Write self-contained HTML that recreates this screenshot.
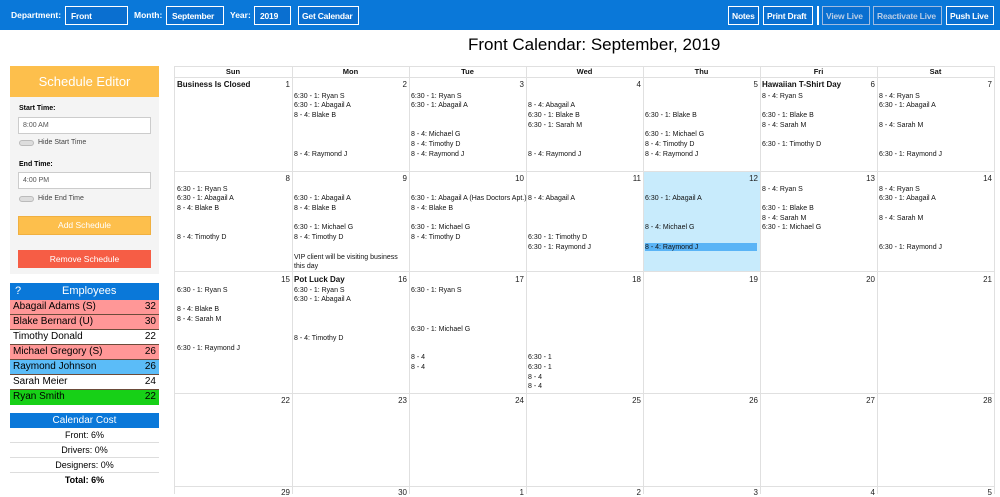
<!DOCTYPE html>
<html><head><meta charset="utf-8"><style>
*{margin:0;padding:0;box-sizing:border-box}
body{width:1000px;height:494px;overflow:hidden;background:#fff;font-family:"Liberation Sans",Arial,sans-serif;position:relative;color:#000}
.a{position:absolute;white-space:nowrap}
.bar{position:absolute;left:0;top:0;width:1000px;height:30px;background:#0a78d9}
.lbl{position:absolute;top:10px;color:#fff;font-weight:bold;font-size:8.5px}
.btn{position:absolute;top:6px;height:19px;border:1.5px solid #fff;color:#fff;font-weight:bold;font-size:8.5px;padding-left:5px;background:#0a6fd0;white-space:nowrap;overflow:hidden;letter-spacing:-0.2px;display:flex;align-items:center}
.btn.dim{border-color:#9fbbe0;color:#b9cde6}
.t{position:absolute;font-size:7px;line-height:9px;white-space:nowrap;color:#111}
.b{font-weight:bold;font-size:8px}
.h{font-weight:bold;font-size:7.5px}
.n{position:absolute;font-size:8px;line-height:9px;color:#222;text-align:right;width:20px}
.vl{position:absolute;width:1px;background:#e0e0e0}
.hl{position:absolute;height:1px;background:#e0e0e0;left:174px;width:820px}
.emp{position:absolute;left:10px;width:149px;height:15px;font-size:10px;line-height:14px;padding:0 3px;border-bottom:1px solid #6b4b3a}
.emp span{float:right}
.cost{position:absolute;left:10px;width:149px;height:15px;font-size:9px;line-height:15px;text-align:center;border-bottom:1px solid #ddd}
</style></head><body>
<div class="bar"></div>
<div class="lbl" style="left:11px">Department:</div>
<div class="btn" style="left:65px;width:63px">Front</div>
<div class="lbl" style="left:134px">Month:</div>
<div class="btn" style="left:166px;width:58px">September</div>
<div class="lbl" style="left:230px">Year:</div>
<div class="btn" style="left:254px;width:37px">2019</div>
<div class="btn" style="left:298px;width:61px;padding-left:3px">Get Calendar</div>
<div class="btn" style="left:728px;width:31px;padding-left:3px">Notes</div>
<div class="btn" style="left:763px;width:50px;padding-left:3px">Print Draft</div>
<div class="a" style="left:817px;top:6px;width:2px;height:19px;background:#fff"></div>
<div class="btn dim" style="left:822px;width:48px;padding-left:3px">View Live</div>
<div class="btn dim" style="left:873px;width:69px;padding-left:3px">Reactivate Live</div>
<div class="btn" style="left:946px;width:48px;padding-left:3px">Push Live</div>

<div class="a" style="left:468px;top:35px;font-size:17px">Front Calendar: September, 2019</div>

<div class="a" style="left:10px;top:66px;width:149px;height:208px;background:#f4f4f4"></div>
<div class="a" style="left:10px;top:66px;width:149px;height:31px;background:#fdbf4c;color:#fff;font-size:13px;text-align:center;line-height:31px">Schedule Editor</div>
<div class="a" style="left:19px;top:105px;font-size:7px;font-weight:bold">Start Time:</div>
<div class="a" style="left:18px;top:117px;width:133px;height:17px;background:#fff;border:1px solid #ccc;font-size:7px;line-height:15px;padding-left:4px;color:#555">8:00 AM</div>
<div class="a" style="left:19px;top:140px;width:15px;height:6px;background:#ddd;border:1px solid #bbb;border-radius:3px"></div>
<div class="a" style="left:38px;top:139px;font-size:7px;color:#444">Hide Start Time</div>
<div class="a" style="left:19px;top:161px;font-size:7px;font-weight:bold">End Time:</div>
<div class="a" style="left:18px;top:172px;width:133px;height:17px;background:#fff;border:1px solid #ccc;font-size:7px;line-height:15px;padding-left:4px;color:#555">4:00 PM</div>
<div class="a" style="left:19px;top:196px;width:15px;height:6px;background:#ddd;border:1px solid #bbb;border-radius:3px"></div>
<div class="a" style="left:38px;top:195px;font-size:7px;color:#444">Hide End Time</div>
<div class="a" style="left:18px;top:216px;width:133px;height:19px;background:#fdbf4c;border:1px solid #f0b040;color:#fff;font-size:8.5px;text-align:center;line-height:17px">Add Schedule</div>
<div class="a" style="left:18px;top:250px;width:133px;height:18px;background:#f65d45;color:#fff;font-size:8.5px;text-align:center;line-height:18px">Remove Schedule</div>

<div class="a" style="left:10px;top:283px;width:149px;height:17px;background:#0a78d9;color:#fff;font-size:11px;line-height:17px"><span style="position:absolute;left:5px">?</span><span style="position:absolute;left:52px">Employees</span></div>
<div class="emp" style="top:300px;background:#ff9797">Abagail Adams (S)<span>32</span></div>
<div class="emp" style="top:315px;background:#ff9797">Blake Bernard (U)<span>30</span></div>
<div class="emp" style="top:330px;background:#fff">Timothy Donald<span>22</span></div>
<div class="emp" style="top:345px;background:#ff9797">Michael Gregory (S)<span>26</span></div>
<div class="emp" style="top:360px;background:#5bbcf8">Raymond Johnson<span>26</span></div>
<div class="emp" style="top:375px;background:#fff">Sarah Meier<span>24</span></div>
<div class="emp" style="top:390px;background:#17d017;border-bottom:none;height:15px">Ryan Smith<span>22</span></div>

<div class="a" style="left:10px;top:413px;width:149px;height:15px;background:#0a78d9;color:#fff;font-size:10px;text-align:center;line-height:15px">Calendar Cost</div>
<div class="cost" style="top:428px">Front: 6%</div>
<div class="cost" style="top:443px">Drivers: 0%</div>
<div class="cost" style="top:458px">Designers: 0%</div>
<div class="cost" style="top:473px;font-weight:bold;border:none">Total: 6%</div>

<div class="a" style="left:643px;top:171px;width:117px;height:100px;background:#c8ebfc"></div>
<div class="a" style="left:645px;top:243px;width:112px;height:8px;background:#5ab4f6"></div>
<div class="hl" style="top:66px"></div>
<div class="hl" style="top:77px"></div>
<div class="hl" style="top:171px"></div>
<div class="hl" style="top:271px"></div>
<div class="hl" style="top:393px"></div>
<div class="hl" style="top:486px"></div>
<div class="vl" style="left:174px;top:66px;height:428px"></div>
<div class="vl" style="left:292px;top:66px;height:428px"></div>
<div class="vl" style="left:409px;top:66px;height:428px"></div>
<div class="vl" style="left:526px;top:66px;height:428px"></div>
<div class="vl" style="left:643px;top:66px;height:428px"></div>
<div class="vl" style="left:760px;top:66px;height:428px"></div>
<div class="vl" style="left:877px;top:66px;height:428px"></div>
<div class="vl" style="left:994px;top:66px;height:428px"></div>

<div class="t h" style="left:174px;width:118px;text-align:center;top:67px">Sun</div>
<div class="t h" style="left:292px;width:117px;text-align:center;top:67px">Mon</div>
<div class="t h" style="left:409px;width:117px;text-align:center;top:67px">Tue</div>
<div class="t h" style="left:526px;width:117px;text-align:center;top:67px">Wed</div>
<div class="t h" style="left:643px;width:117px;text-align:center;top:67px">Thu</div>
<div class="t h" style="left:760px;width:117px;text-align:center;top:67px">Fri</div>
<div class="t h" style="left:877px;width:117px;text-align:center;top:67px">Sat</div>

<div class="n" style="left:270px;top:80px">1</div><div class="n" style="left:387px;top:80px">2</div><div class="n" style="left:504px;top:80px">3</div><div class="n" style="left:621px;top:80px">4</div><div class="n" style="left:738px;top:80px">5</div><div class="n" style="left:855px;top:80px">6</div><div class="n" style="left:972px;top:80px">7</div>
<div class="n" style="left:270px;top:174px">8</div><div class="n" style="left:387px;top:174px">9</div><div class="n" style="left:504px;top:174px">10</div><div class="n" style="left:621px;top:174px">11</div><div class="n" style="left:738px;top:174px">12</div><div class="n" style="left:855px;top:174px">13</div><div class="n" style="left:972px;top:174px">14</div>
<div class="n" style="left:270px;top:275px">15</div><div class="n" style="left:387px;top:275px">16</div><div class="n" style="left:504px;top:275px">17</div><div class="n" style="left:621px;top:275px">18</div><div class="n" style="left:738px;top:275px">19</div><div class="n" style="left:855px;top:275px">20</div><div class="n" style="left:972px;top:275px">21</div>
<div class="n" style="left:270px;top:396px">22</div><div class="n" style="left:387px;top:396px">23</div><div class="n" style="left:504px;top:396px">24</div><div class="n" style="left:621px;top:396px">25</div><div class="n" style="left:738px;top:396px">26</div><div class="n" style="left:855px;top:396px">27</div><div class="n" style="left:972px;top:396px">28</div>
<div class="n" style="left:270px;top:488px">29</div><div class="n" style="left:387px;top:488px">30</div><div class="n" style="left:504px;top:488px">1</div><div class="n" style="left:621px;top:488px">2</div><div class="n" style="left:738px;top:488px">3</div><div class="n" style="left:855px;top:488px">4</div><div class="n" style="left:972px;top:488px">5</div>

<div class="t b" style="left:177px;top:80px">Business Is Closed</div>
<div class="t" style="left:294px;top:92px">6:30 - 1: Ryan S</div>
<div class="t" style="left:294px;top:101px">6:30 - 1: Abagail A</div>
<div class="t" style="left:294px;top:111px">8 - 4: Blake B</div>
<div class="t" style="left:294px;top:150px">8 - 4: Raymond J</div>
<div class="t" style="left:411px;top:92px">6:30 - 1: Ryan S</div>
<div class="t" style="left:411px;top:101px">6:30 - 1: Abagail A</div>
<div class="t" style="left:411px;top:130px">8 - 4: Michael G</div>
<div class="t" style="left:411px;top:140px">8 - 4: Timothy D</div>
<div class="t" style="left:411px;top:150px">8 - 4: Raymond J</div>
<div class="t" style="left:528px;top:101px">8 - 4: Abagail A</div>
<div class="t" style="left:528px;top:111px">6:30 - 1: Blake B</div>
<div class="t" style="left:528px;top:121px">6:30 - 1: Sarah M</div>
<div class="t" style="left:528px;top:150px">8 - 4: Raymond J</div>
<div class="t" style="left:645px;top:111px">6:30 - 1: Blake B</div>
<div class="t" style="left:645px;top:130px">6:30 - 1: Michael G</div>
<div class="t" style="left:645px;top:140px">8 - 4: Timothy D</div>
<div class="t" style="left:645px;top:150px">8 - 4: Raymond J</div>
<div class="t b" style="left:762px;top:80px">Hawaiian T-Shirt Day</div>
<div class="t" style="left:762px;top:92px">8 - 4: Ryan S</div>
<div class="t" style="left:762px;top:111px">6:30 - 1: Blake B</div>
<div class="t" style="left:762px;top:121px">8 - 4: Sarah M</div>
<div class="t" style="left:762px;top:140px">6:30 - 1: Timothy D</div>
<div class="t" style="left:879px;top:92px">8 - 4: Ryan S</div>
<div class="t" style="left:879px;top:101px">6:30 - 1: Abagail A</div>
<div class="t" style="left:879px;top:121px">8 - 4: Sarah M</div>
<div class="t" style="left:879px;top:150px">6:30 - 1: Raymond J</div>

<div class="t" style="left:177px;top:185px">6:30 - 1: Ryan S</div>
<div class="t" style="left:177px;top:194px">6:30 - 1: Abagail A</div>
<div class="t" style="left:177px;top:204px">8 - 4: Blake B</div>
<div class="t" style="left:177px;top:233px">8 - 4: Timothy D</div>
<div class="t" style="left:294px;top:194px">6:30 - 1: Abagail A</div>
<div class="t" style="left:294px;top:204px">8 - 4: Blake B</div>
<div class="t" style="left:294px;top:223px">6:30 - 1: Michael G</div>
<div class="t" style="left:294px;top:233px">8 - 4: Timothy D</div>
<div class="t" style="left:294px;top:253px;white-space:normal;width:112px;line-height:9px">VIP client will be visiting business this day</div>
<div class="t" style="left:411px;top:194px">6:30 - 1: Abagail A (Has Doctors Apt.)</div>
<div class="t" style="left:411px;top:204px">8 - 4: Blake B</div>
<div class="t" style="left:411px;top:223px">6:30 - 1: Michael G</div>
<div class="t" style="left:411px;top:233px">8 - 4: Timothy D</div>
<div class="t" style="left:528px;top:194px">8 - 4: Abagail A</div>
<div class="t" style="left:528px;top:233px">6:30 - 1: Timothy D</div>
<div class="t" style="left:528px;top:243px">6:30 - 1: Raymond J</div>
<div class="t" style="left:645px;top:194px">6:30 - 1: Abagail A</div>
<div class="t" style="left:645px;top:223px">8 - 4: Michael G</div>
<div class="t" style="left:645px;top:243px">8 - 4: Raymond J</div>
<div class="t" style="left:762px;top:185px">8 - 4: Ryan S</div>
<div class="t" style="left:762px;top:204px">6:30 - 1: Blake B</div>
<div class="t" style="left:762px;top:214px">8 - 4: Sarah M</div>
<div class="t" style="left:762px;top:223px">6:30 - 1: Michael G</div>
<div class="t" style="left:879px;top:185px">8 - 4: Ryan S</div>
<div class="t" style="left:879px;top:194px">6:30 - 1: Abagail A</div>
<div class="t" style="left:879px;top:214px">8 - 4: Sarah M</div>
<div class="t" style="left:879px;top:243px">6:30 - 1: Raymond J</div>

<div class="t" style="left:177px;top:286px">6:30 - 1: Ryan S</div>
<div class="t" style="left:177px;top:305px">8 - 4: Blake B</div>
<div class="t" style="left:177px;top:315px">8 - 4: Sarah M</div>
<div class="t" style="left:177px;top:344px">6:30 - 1: Raymond J</div>
<div class="t b" style="left:294px;top:275px">Pot Luck Day</div>
<div class="t" style="left:294px;top:286px">6:30 - 1: Ryan S</div>
<div class="t" style="left:294px;top:295px">6:30 - 1: Abagail A</div>
<div class="t" style="left:294px;top:334px">8 - 4: Timothy D</div>
<div class="t" style="left:411px;top:286px">6:30 - 1: Ryan S</div>
<div class="t" style="left:411px;top:325px">6:30 - 1: Michael G</div>
<div class="t" style="left:411px;top:353px">8 - 4</div>
<div class="t" style="left:411px;top:363px">8 - 4</div>
<div class="t" style="left:528px;top:353px">6:30 - 1</div>
<div class="t" style="left:528px;top:363px">6:30 - 1</div>
<div class="t" style="left:528px;top:373px">8 - 4</div>
<div class="t" style="left:528px;top:382px">8 - 4</div>
</body></html>
